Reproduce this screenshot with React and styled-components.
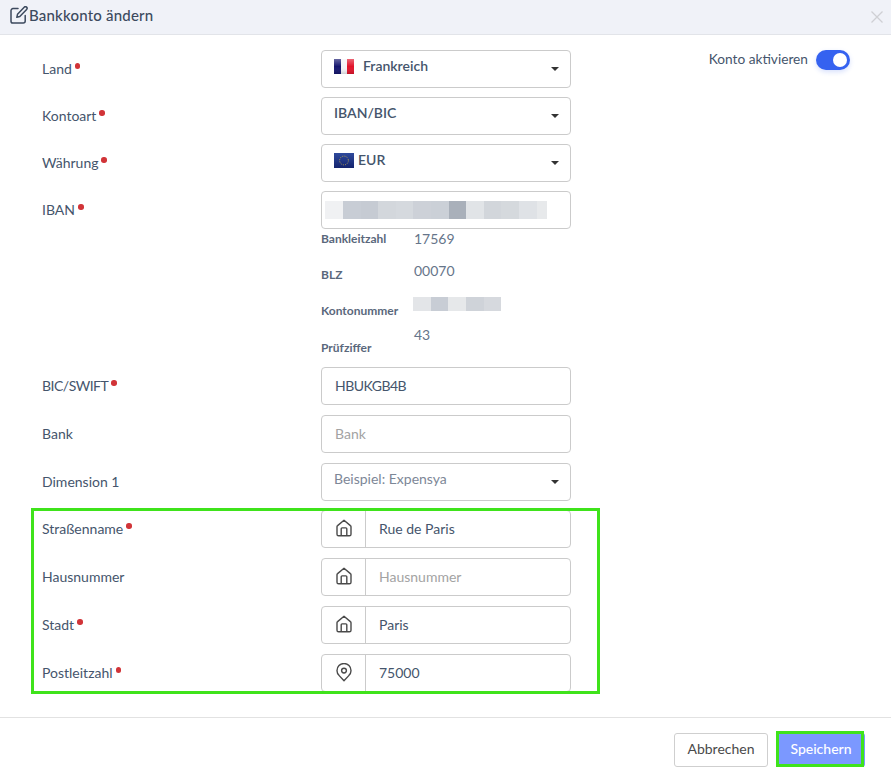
import styled, { createGlobalStyle } from "styled-components";

const GlobalStyle = createGlobalStyle`
  html, body {
    margin: 0;
    padding: 0;
    background: #fff;
  }
  *, *::before, *::after {
    box-sizing: border-box;
  }
`;

const Modal = styled.div`
  position: relative;
  width: 891px;
  height: 777px;
  overflow: hidden;
  background: #fff;
  font-family: "Lato", "Liberation Sans", sans-serif;
  font-size: 14px;
  color: #45556c;
`;

const Header = styled.header`
  display: flex;
  align-items: center;
  height: 35px;
  padding: 0 8px 5px 10px;
  background: #f0f2f8;
  border-bottom: 1px solid #e2e4e9;
`;

const Title = styled.h1`
  flex: 1;
  margin: 0 0 0 1px;
  font-size: 15px;
  font-weight: 500;
  letter-spacing: 0.2px;
  color: #3c4a5e;
`;

const Close = styled.span`
  display: flex;
  margin-top: 5px;
`;

const Body = styled.div`
  display: flex;
  height: 682px;
  padding: 15px 41px 0 42px;
`;

const Form = styled.div`
  width: 529px;
`;

const Aside = styled.div`
  flex: 1;
  display: flex;
  justify-content: flex-end;
  align-items: center;
  align-self: flex-start;
  gap: 8px;
  height: 20px;
  font-size: 13.7px;
`;

const AsideText = styled.span`
  margin-top: -3px;
`;

const Switch = styled.span`
  position: relative;
  display: block;
  width: 34px;
  height: 20px;
  border-radius: 10px;
  background: #3562f0;
  box-shadow: 0 2px 5px rgba(53, 98, 240, 0.2);

  &::after {
    content: "";
    position: absolute;
    top: 3px;
    right: 3px;
    width: 14px;
    height: 14px;
    border-radius: 50%;
    background: #fff;
  }
`;

const Row = styled.div`
  display: flex;
  height: 38px;
  margin-bottom: ${(p) => p.$gap}px;
`;

const Label = styled.label`
  display: flex;
  align-items: flex-start;
  width: 279px;
  padding-top: 10px;
  line-height: 18px;
  font-size: 14px;
  letter-spacing: ${(p) => p.$spacing || 0}px;
`;

const Required = styled.span`
  width: 5.5px;
  height: 5.5px;
  margin: 3px 0 0 3px;
  border-radius: 50%;
  background: #d13438;
`;

const Control = styled.div`
  position: relative;
  display: flex;
  align-items: ${(p) => (p.$top ? "flex-start" : "center")};
  gap: ${(p) => p.$iconGap || 0}px;
  width: 250px;
  height: 38px;
  padding: ${(p) => (p.$top ? "6px 12px" : "0 13px")};
  border: 1px solid #cbcbcb;
  border-radius: 4px;
  background: #fff;
  line-height: 18px;
  font-size: 14px;
  letter-spacing: ${(p) => p.$spacing || 0}px;
  color: ${(p) => p.$color || "#45556c"};
  font-weight: ${(p) => (p.$strong ? 600 : 400)};
`;

const Caret = styled.span`
  position: absolute;
  right: 11px;
  top: 16px;
  width: 0;
  height: 0;
  border-left: 4px solid transparent;
  border-right: 4px solid transparent;
  border-top: 4px solid #333;
`;

const Addon = styled.div`
  display: flex;
  width: 250px;
  height: 38px;
  border: 1px solid #cbcbcb;
  border-radius: 4px;
  background: #fff;
`;

const AddonIcon = styled.span`
  display: flex;
  align-items: center;
  justify-content: center;
  width: 44px;
  padding-bottom: 2px;
  border-right: 1px solid #cbcbcb;
  color: #4a4a4a;
`;

const AddonText = styled.span`
  flex: 1;
  padding-left: 13px;
  line-height: 35px;
  font-size: 14px;
  color: ${(p) => (p.$placeholder ? "#a3a3a3" : "#45556c")};
`;

const Blur = styled.div`
  display: flex;
  margin-left: ${(p) => p.$shift || 0}px;
  margin-top: ${(p) => p.$drop || 0}px;
`;

const BlurCell = styled.span`
  display: block;
  width: ${(p) => p.$w}px;
  height: ${(p) => p.$h}px;
  background: ${(p) => p.$c};
`;

const Details = styled.div`
  display: flex;
  height: 138px;
  margin-left: 279px;
`;

const DetailLabels = styled.div`
  display: flex;
  flex-direction: column;
  width: 93px;
  padding-top: 2px;
`;

const DetailLabel = styled.span`
  flex-shrink: 0;
  height: 36.2px;
  line-height: 15px;
  font-size: 12px;
  font-weight: 700;
  color: #5a687c;
`;

const DetailValues = styled.div`
  display: flex;
  flex-direction: column;
`;

const DetailValue = styled.span`
  display: flex;
  align-items: center;
  flex-shrink: 0;
  height: 32px;
  padding-bottom: 12px;
  line-height: 18px;
  font-size: 14px;
  color: #66758a;
`;

const Footer = styled.footer`
  display: flex;
  justify-content: flex-end;
  align-items: flex-start;
  gap: 9px;
  height: 60px;
  padding: 15px 26px 0 0;
  border-top: 1px solid #e2e2e2;
`;

const Button = styled.button`
  height: 34px;
  padding: 0 0 4px;
  border-radius: 3px;
  font-family: inherit;
  font-size: 14px;
  cursor: pointer;
`;

const CancelButton = styled(Button)`
  width: 94px;
  border: 1px solid #cfcfcf;
  background: #fff;
  color: #4a4a4a;
`;

const SaveButton = styled(Button)`
  position: relative;
  width: 88px;
  border: none;
  background: #7b98ff;
  color: #fff;
  font-weight: 500;

  &::after {
    content: "";
    position: absolute;
    left: -1px;
    top: -2px;
    width: 88px;
    height: 36px;
    border: 3px solid #3fe31b;
  }
`;

const HighlightBox = styled.div`
  position: absolute;
  left: 31px;
  top: 508px;
  width: 569px;
  height: 186px;
  border: 3px solid #3fe31b;
  pointer-events: none;
`;

const FlagIcon = styled.svg`
  flex-shrink: 0;
  margin-top: 2px;
`;

const CloseIcon = () => (
  <svg width="12" height="12" viewBox="0 0 12 12" fill="none" stroke="#cfd0d4" strokeWidth="1.3">
    <path d="M0.5 0.5l11 11M11.5 0.5l-11 11" />
  </svg>
);

const EditIcon = () => (
  <svg width="18" height="18" viewBox="0 0 18 18" fill="none" stroke="#3c4a5e" strokeWidth="1.5" strokeLinecap="round" strokeLinejoin="round" style={{ flexShrink: 0 }}>
    <path d="M8 2.6H3A2 2 0 0 0 1 4.6v10.6a1.8 1.8 0 0 0 1.8 1.8h10.4a2 2 0 0 0 2-2V9.6" />
    <path d="M14.2 1.2a1.6 1.6 0 0 1 2.4 2.3l-6.8 7-3 .8.7-3z" />
  </svg>
);

const HouseIcon = () => (
  <svg width="16" height="18" viewBox="0 0 16 18" fill="none" stroke="currentColor" strokeWidth="1.4" strokeLinejoin="round">
    <path d="M8 1.2L1.6 6.6c-.4.3-.6.7-.6 1.2v7.4c0 .9.7 1.6 1.6 1.6h10.8c.9 0 1.6-.7 1.6-1.6V7.8c0-.5-.2-.9-.6-1.2z" />
    <path d="M5.2 16.6V9.8c0-.5.4-.9.9-.9h3.8c.5 0 .9.4.9.9v6.8" />
  </svg>
);

const PinIcon = () => (
  <svg width="16" height="19" viewBox="0 0 16 19" fill="none" stroke="currentColor" strokeWidth="1.4">
    <path d="M8 17.8l-4.8-5.2A7 7 0 1 1 12.8 12.6z" strokeLinejoin="round" />
    <circle cx="8" cy="7.6" r="2.4" />
  </svg>
);

const FranceFlag = () => (
  <FlagIcon width="20" height="15" viewBox="0 0 20 15">
    <defs>
      <linearGradient id="frShade" x1="0" y1="0" x2="0" y2="1">
        <stop offset="0" stopColor="#fff" stopOpacity="0.35" />
        <stop offset="0.5" stopColor="#fff" stopOpacity="0" />
        <stop offset="1" stopColor="#000" stopOpacity="0.15" />
      </linearGradient>
    </defs>
    <rect x="0" width="7" height="15" fill="#14156e" />
    <rect x="7" width="6" height="15" fill="#f4f4f8" />
    <rect x="13" width="7" height="15" fill="#e2132a" />
    <rect width="20" height="15" fill="url(#frShade)" />
  </FlagIcon>
);

const EuFlag = () => (
  <FlagIcon width="20" height="15" viewBox="0 0 20 15">
    <defs>
      <linearGradient id="euShade" x1="0" y1="0" x2="0" y2="1">
        <stop offset="0" stopColor="#2f4a9c" />
        <stop offset="1" stopColor="#14246e" />
      </linearGradient>
    </defs>
    <rect width="20" height="15" fill="url(#euShade)" />
    <circle cx="10" cy="7.5" r="4.4" fill="none" stroke="#c9b04a" strokeWidth="0.9" strokeDasharray="1 1.3" />
  </FlagIcon>
);

const ibanBlur = [
  ["#f0f1f3", 18], ["#c8cdd5", 18], ["#c6cbd3", 17], ["#d3d7dc", 18], ["#d5d9de", 17],
  ["#cdd1d8", 18], ["#cbd0d7", 18], ["#a9b0ba", 17], ["#e1e4e7", 18], ["#d2d6db", 17],
  ["#d5d9dd", 18], ["#dfe2e6", 18], ["#e7e9eb", 10],
];

const kontoBlur = [
  ["#e3e5e8", 18], ["#c8cdd5", 17], ["#e6e8ea", 18], ["#cfd3d9", 18], ["#d6d9de", 17],
];

const AddressRow = ({ label, required, icon, value, placeholder, gap }) => (
  <Row $gap={gap}>
    <Label>
      {label}
      {required && <Required />}
    </Label>
    <Addon>
      <AddonIcon>{icon}</AddonIcon>
      <AddonText $placeholder={!value}>{value || placeholder}</AddonText>
    </Addon>
  </Row>
);

export default function App() {
  return (
    <Modal>
      <GlobalStyle />
      <Header>
        <EditIcon />
        <Title>Bankkonto ändern</Title>
        <Close>
          <CloseIcon />
        </Close>
      </Header>

      <Body>
        <Form>
          <Row $gap={9}>
            <Label>Land<Required /></Label>
            <Control $top $strong $iconGap={9}>
              <FranceFlag />
              Frankreich
              <Caret />
            </Control>
          </Row>
          <Row $gap={9}>
            <Label>Kontoart<Required /></Label>
            <Control $top $strong>
              IBAN/BIC
              <Caret />
            </Control>
          </Row>
          <Row $gap={9}>
            <Label>Währung<Required /></Label>
            <Control $top $strong $iconGap={4}>
              <EuFlag />
              EUR
              <Caret />
            </Control>
          </Row>
          <Row $gap={0}>
            <Label>IBAN<Required /></Label>
            <Control>
              <Blur $shift={-10}>
                {ibanBlur.map(([c, w], i) => (
                  <BlurCell key={i} $c={c} $w={w} $h={18} />
                ))}
              </Blur>
            </Control>
          </Row>

          <Details>
            <DetailLabels>
              <DetailLabel>Bankleitzahl</DetailLabel>
              <DetailLabel>BLZ</DetailLabel>
              <DetailLabel>Kontonummer</DetailLabel>
              <DetailLabel>Prüfziffer</DetailLabel>
            </DetailLabels>
            <DetailValues>
              <DetailValue>17569</DetailValue>
              <DetailValue>00070</DetailValue>
              <DetailValue>
                <Blur $shift={-1} $drop={2}>
                  {kontoBlur.map(([c, w], i) => (
                    <BlurCell key={i} $c={c} $w={w} $h={14} />
                  ))}
                </Blur>
              </DetailValue>
              <DetailValue>43</DetailValue>
            </DetailValues>
          </Details>

          <Row $gap={10}>
            <Label $spacing={-0.5}>BIC/SWIFT<Required /></Label>
            <Control $spacing={-0.5}>HBUKGB4B</Control>
          </Row>
          <Row $gap={10}>
            <Label>Bank</Label>
            <Control $color="#a3a3a3">Bank</Control>
          </Row>
          <Row $gap={9}>
            <Label>Dimension 1</Label>
            <Control $top $color="#7d8797">
              Beispiel: Expensya
              <Caret />
            </Control>
          </Row>
          <AddressRow label="Straßenname" required icon={<HouseIcon />} value="Rue de Paris" gap={10} />
          <AddressRow label="Hausnummer" icon={<HouseIcon />} placeholder="Hausnummer" gap={10} />
          <AddressRow label="Stadt" required icon={<HouseIcon />} value="Paris" gap={10} />
          <AddressRow label="Postleitzahl" required icon={<PinIcon />} value="75000" gap={0} />
        </Form>
        <Aside>
          <AsideText>Konto aktivieren</AsideText>
          <Switch />
        </Aside>
      </Body>

      <Footer>
        <CancelButton>Abbrechen</CancelButton>
        <SaveButton>Speichern</SaveButton>
      </Footer>

      <HighlightBox />
    </Modal>
  );
}
